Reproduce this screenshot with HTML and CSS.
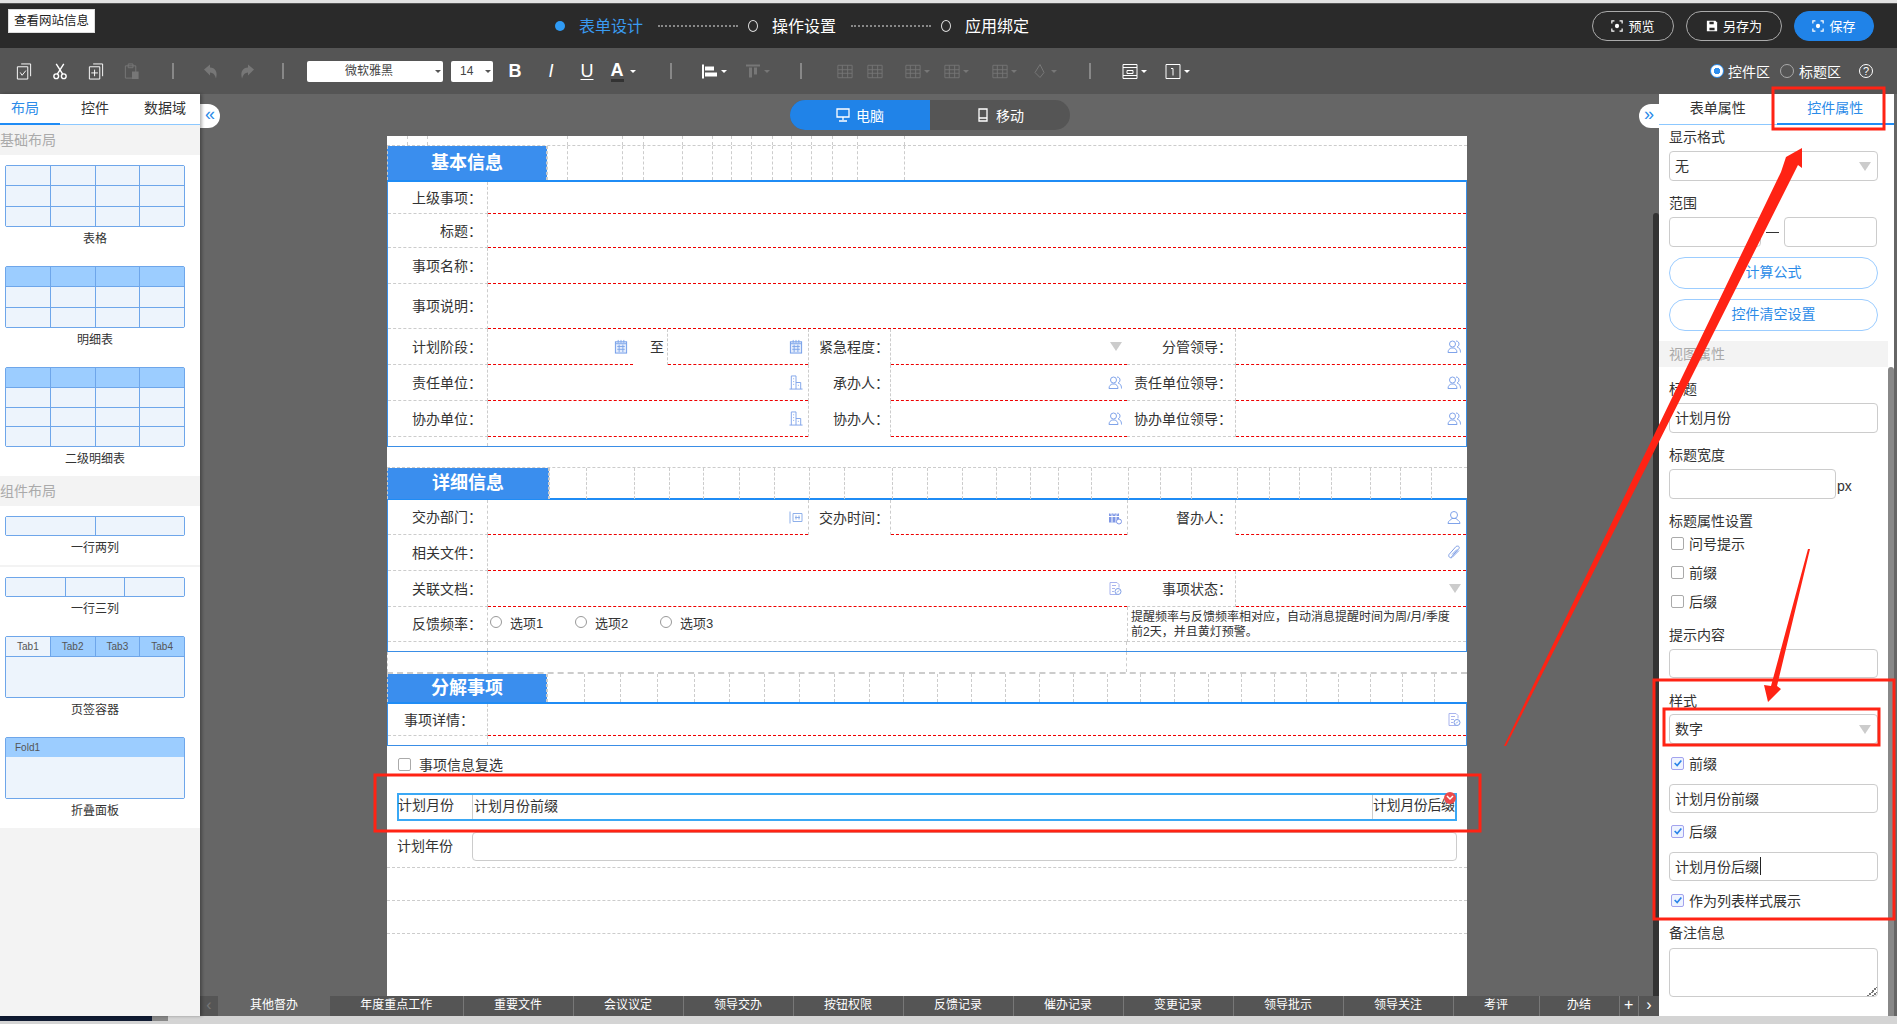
FILE: index.html
```html
<!DOCTYPE html>
<html lang="zh-CN">
    <head>
        <meta charset="UTF-8">
        <title>表单设计</title>
        <link rel="stylesheet" href="styles.css">
    </head>

    <body>
        <svg class="defs" width="0" height="0">
            <symbol id="i-cal" viewBox="0 0 14 16"><rect x="1" y="3" width="12" height="12" fill="#e3ecfc" stroke="#6f9be8"/><path d="M1 5h12M4 1v3M7 1v3M10 1v3M3 8h8M3 11h8M5 6v8M9 6v8" stroke="#7fa6ea" fill="none"/></symbol>
            <symbol id="i-org" viewBox="0 0 14 16"><path d="M2 15V1h5v14M7 8h5v7M0 15h14M4 4h1M4 7h1M4 10h1M9 11h1" stroke="#7fa3ea" fill="none"/></symbol>
            <symbol id="i-users" viewBox="0 0 14 14"><circle cx="5.500" cy="4.500" r="3" stroke="#7fa3ea" fill="none"/><path d="M1 13c0-3 2-4 3-4.500h3c1 .5 3 1.500 3 4.500zM9 1.500c2 0 3 1.500 3 3s-1 2.500-2 3c1.500.5 3.500 1.500 3.500 5.500" stroke="#7fa3ea" fill="none"/></symbol>
            <symbol id="i-user" viewBox="0 0 14 14"><circle cx="7" cy="4.500" r="3.500" stroke="#7fa3ea" fill="none"/><path d="M1 13c0-3 3-3.500 4-5h4c1 1.500 4 2 4 5z" stroke="#7fa3ea" fill="none"/></symbol>
            <symbol id="i-dept" viewBox="0 0 14 14"><path d="M1 1v12M4 3h9v8H4zM6 7h5M7 5v4M10 5v4" stroke="#8fb0ea" fill="none"/></symbol>
            <symbol id="i-calclock" viewBox="0 0 14 14"><rect x="1" y="3" width="10" height="9" fill="#7f97e6"/><path d="M3 1v3M6 1v3M9 1v3M1 6h10M4 4v8M8 4v8" stroke="#fff" fill="none"/><circle cx="11" cy="11" r="2.500" fill="#fff" stroke="#7f97e6"/></symbol>
            <symbol id="i-clip" viewBox="0 0 14 14"><path d="M4 12 12 3c1-2-1-3-3-2L2 9c-1 2 1 4 3 3l7-7M5 9l5-5" stroke="#7f9fe6" fill="none"/></symbol>
            <symbol id="i-docedit" viewBox="0 0 14 14"><path d="M9 13H2V1h7l2 2v3M4 4h4M4 7h3M4 10h2" stroke="#a9b4ee" fill="none"/><circle cx="10" cy="10" r="3" fill="#fff" stroke="#7f9fe6"/><path d="m9 11 2-2" stroke="#7f9fe6"/></symbol>
            <symbol id="t-check" viewBox="0 0 16 18"><path d="M5 1h10v13M1 4h11v13H1z" stroke="#fff" fill="none"/><path d="m4 10 2 3 4-5" stroke="#fff" fill="none"/></symbol>
            <symbol id="t-cut" viewBox="0 0 16 18"><circle cx="4" cy="14" r="2.500" stroke="#fff" stroke-width="1.500" fill="none"/><circle cx="12" cy="14" r="2.500" stroke="#fff" stroke-width="1.500" fill="none"/><path d="m5 12 7-11M11 12 4 1" stroke="#fff" stroke-width="1.500"/></symbol>
            <symbol id="t-copy" viewBox="0 0 16 18"><path d="M5 1h10v13M1 4h11v13H1zM6.500 7v7M3 10.500h7" stroke="#fff" fill="none"/></symbol>
            <symbol id="t-paste" viewBox="0 0 16 18"><path d="M1 3h11v13H1zM4 1h5v4H4z" fill="none" stroke="#777"/><rect x="8" y="9" width="7" height="8" fill="#777"/></symbol>
            <symbol id="t-undo" viewBox="0 0 16 16"><path d="M1 6 7 1v3c5 0 8 4 6 11-1-4-3-6-6-6v3z" fill="#777"/></symbol>
            <symbol id="t-redo" viewBox="0 0 16 16"><path d="M15 6 9 1v3c-5 0-8 4-6 11 1-4 3-6 6-6v3z" fill="#777"/></symbol>
            <symbol id="t-align" viewBox="0 0 16 16"><path d="M1 1v14" stroke="#fff" stroke-width="2"/><path d="M3 3h9v4H3zM3 9h12v4H3z" fill="#fff"/></symbol>
            <symbol id="t-valign" viewBox="0 0 16 16"><path d="M1 2h14" stroke="#777" stroke-width="2"/><path d="M4 4h3v10H4zM9 4h3v7H9z" fill="#777"/></symbol>
            <symbol id="t-merge" viewBox="0 0 18 16"><path d="M1 1h16v14H1zM1 6h16M1 10h16M6 1v14M12 1v14" stroke="#777" fill="none"/></symbol>
            <symbol id="t-frame" viewBox="0 0 16 16"><path d="M1 1h14v14H1zM1 4h14M1 12h14M5 7h6v3H5z" stroke="#fff" fill="none"/></symbol>
            <symbol id="t-box" viewBox="0 0 16 16"><path d="M1 1h14v14H1zM6 5h2v7" stroke="#fff" fill="none"/></symbol>
            <symbol id="t-fill" viewBox="0 0 16 16"><path d="M8 1 3 9l5 5 4-5z" stroke="#777" fill="none"/></symbol>
            <symbol id="b-scan" viewBox="0 0 14 14"><path d="M1 4V1h3M10 1h3v3M13 10v3h-3M4 13H1v-3" stroke="#fff" fill="none" stroke-width="1.400"/><circle cx="7" cy="7" r="2.500" fill="#fff"/></symbol>
            <symbol id="b-disk" viewBox="0 0 14 14"><path d="M1 1h10l2 2v10H1z" fill="#fff"/><path d="M4 2h5v3H4zM4 9h6v3H4z" fill="#2a2a2a"/></symbol>
            <symbol id="d-pc" viewBox="0 0 14 14"><path d="M1 1h12v8H1zM7 9v3M3 13h8" stroke="#fff" fill="none" stroke-width="1.300"/></symbol>
            <symbol id="d-phone" viewBox="0 0 14 14"><path d="M3 1h8v12H3zM3 10h8" stroke="#fff" fill="none" stroke-width="1.300"/></symbol>
            <symbol id="c-tick" viewBox="0 0 12 12"><path d="m2 6 3 3 5-6" stroke="#2b84e8" stroke-width="2" fill="none"/></symbol>
        </svg>

        <div class="app">
            <div class="top-strip"></div>

            <header class="header">
                <div class="site-info">查看网站信息</div>
                <div class="steps">
                    <span class="step-dot"></span>
                    <span class="step-text step-active">表单设计</span>
                    <span class="step-line"></span>
                    <span class="step-ring"></span>
                    <span class="step-text">操作设置</span>
                    <span class="step-line"></span>
                    <span class="step-ring"></span>
                    <span class="step-text">应用绑定</span>
                </div>
                <div class="actions">
                    <span class="btn btn-preview"><svg class="btn-icon"><use href="#b-scan"/></svg>预览</span>
                    <span class="btn btn-saveas"><svg class="btn-icon"><use href="#b-disk"/></svg>另存为</span>
                    <span class="btn btn-save"><svg class="btn-icon"><use href="#b-scan"/></svg>保存</span>
                </div>
            </header>

            <div class="toolbar">
                <span class="tb first"><svg><use href="#t-check"/></svg></span>
                <span class="tb"><svg><use href="#t-cut"/></svg></span>
                <span class="tb"><svg><use href="#t-copy"/></svg></span>
                <span class="tb"><svg><use href="#t-paste"/></svg></span>
                <span class="tb-sep ml22"></span>
                <span class="tb ml19"><svg><use href="#t-undo"/></svg></span>
                <span class="tb"><svg><use href="#t-redo"/></svg></span>
                <span class="tb-sep ml17"></span>
                <span class="tb-select font-select">微软雅黑</span>
                <span class="tb-select size-select">14</span>
                <span class="tb tb-text ml4"><b>B</b></span>
                <span class="tb tb-text tb-italic">I</span>
                <span class="tb tb-text tb-under">U</span>
                <span class="tb tb-text tb-color caret"><b>A</b></span>
                <span class="tb-sep ml29"></span>
                <span class="tb caret ml24"><svg><use href="#t-align"/></svg></span>
                <span class="tb caret dim ml7"><svg><use href="#t-valign"/></svg></span>
                <span class="tb-sep ml25"></span>
                <span class="tb sm ml29"><svg><use href="#t-merge"/></svg></span>
                <span class="tb sm ml2"><svg><use href="#t-merge"/></svg></span>
                <span class="tb sm caret dim ml14"><svg><use href="#t-merge"/></svg></span>
                <span class="tb sm caret dim ml11"><svg><use href="#t-merge"/></svg></span>
                <span class="tb sm caret dim ml20"><svg><use href="#t-merge"/></svg></span>
                <span class="tb sm caret dim ml12"><svg><use href="#t-fill"/></svg></span>
                <span class="tb-sep ml31"></span>
                <span class="tb sm caret ml29"><svg><use href="#t-frame"/></svg></span>
                <span class="tb sm caret ml15"><svg><use href="#t-box"/></svg></span>
                <div class="area-switch">
                    <span class="area-radio on"></span><span>控件区</span>
                    <span class="area-radio"></span><span>标题区</span>
                    <span class="help">?</span>
                </div>
            </div>

            <div class="main">
                <aside class="left">
                    <div class="left-tabs">
                        <span class="left-tab current">布局</span>
                        <span class="left-tab">控件</span>
                        <span class="left-tab">数据域</span>
                    </div>
                    <div class="group-title">基础布局</div>
                    <div class="widgets">
                        <div class="widget">
                            <div class="mini cols4 rows3"><i></i><i></i><i></i><i></i><i></i><i></i><i></i><i></i><i></i><i></i><i></i><i></i></div>
                            <div class="widget-name">表格</div>
                        </div>
                        <div class="widget">
                            <div class="mini cols4 rows3 has-head"><i></i><i></i><i></i><i></i><i></i><i></i><i></i><i></i><i></i><i></i><i></i><i></i></div>
                            <div class="widget-name">明细表</div>
                        </div>
                        <div class="widget end">
                            <div class="mini cols4 rows4 has-head"><i></i><i></i><i></i><i></i><i></i><i></i><i></i><i></i><i></i><i></i><i></i><i></i><i></i><i></i><i></i><i></i></div>
                            <div class="widget-name">二级明细表</div>
                        </div>
                    </div>
                    <div class="group-title">组件布局</div>
                    <div class="widgets">
                        <div class="widget end split">
                            <div class="mini cols2 rows1"><i></i><i></i></div>
                            <div class="widget-name">一行两列</div>
                        </div>
                        <div class="widget next">
                            <div class="mini cols3 rows1"><i></i><i></i><i></i></div>
                            <div class="widget-name">一行三列</div>
                        </div>
                        <div class="widget">
                            <div class="mini mini-tabs">
                                <i class="tab-on">Tab1</i><i>Tab2</i><i>Tab3</i><i>Tab4</i>
                                <i class="tab-body"></i>
                            </div>
                            <div class="widget-name">页签容器</div>
                        </div>
                        <div class="widget end">
                            <div class="mini mini-fold">
                                <i>Fold1</i>
                                <i class="tab-body"></i>
                            </div>
                            <div class="widget-name">折叠面板</div>
                        </div>
                    </div>
                    <div class="left-rest"></div>
                </aside>

                <div class="center">
                    <div class="canvas">
                        <div class="device-switch">
                            <span class="device on"><svg><use href="#d-pc"/></svg>电脑</span>
                            <span class="device"><svg><use href="#d-phone"/></svg>移动</span>
                        </div>

                        <div class="paper">
                            <div class="band"><i></i><i></i><i></i><i></i><i></i><i></i><i></i><i></i><i></i><i></i><i></i><i></i><i></i><i></i><i></i><i></i></div>
                            <div class="sec-head head-a">
                                <div class="sec-title">基本信息</div>
                                <i></i><i></i><i></i><i></i><i></i><i></i><i></i><i></i><i></i><i></i><i></i><i></i><i></i><i></i>
                            </div>
                            <div class="form-table">
                                <div class="row h32">
                                    <div class="lb">上级事项：</div><div class="fd span-all"></div>
                                </div>
                                <div class="row h34">
                                    <div class="lb">标题：</div><div class="fd span-all"></div>
                                </div>
                                <div class="row h36">
                                    <div class="lb">事项名称：</div><div class="fd span-all"></div>
                                </div>
                                <div class="row h45">
                                    <div class="lb">事项说明：</div><div class="fd span-all"></div>
                                </div>
                                <div class="row h36">
                                    <div class="lb">计划阶段：</div>
                                    <div class="fd"><svg class="ico"><use href="#i-cal"/></svg></div>
                                    <div class="lb to">至</div>
                                    <div class="fd"><svg class="ico"><use href="#i-cal"/></svg></div>
                                    <div class="lb plain">紧急程度：</div>
                                    <div class="fd"><span class="tri"></span></div>
                                    <div class="lb last">分管领导：</div>
                                    <div class="fd"><svg class="ico"><use href="#i-users"/></svg></div>
                                </div>
                                <div class="row h36">
                                    <div class="lb">责任单位：</div>
                                    <div class="fd span3"><svg class="ico"><use href="#i-org"/></svg></div>
                                    <div class="lb plain">承办人：</div>
                                    <div class="fd"><svg class="ico"><use href="#i-users"/></svg></div>
                                    <div class="lb last">责任单位领导：</div>
                                    <div class="fd"><svg class="ico"><use href="#i-users"/></svg></div>
                                </div>
                                <div class="row h36">
                                    <div class="lb">协办单位：</div>
                                    <div class="fd span3"><svg class="ico"><use href="#i-org"/></svg></div>
                                    <div class="lb plain">协办人：</div>
                                    <div class="fd"><svg class="ico"><use href="#i-users"/></svg></div>
                                    <div class="lb last">协办单位领导：</div>
                                    <div class="fd"><svg class="ico"><use href="#i-users"/></svg></div>
                                </div>
                                <div class="row h10 gap-row"><i></i></div>
                            </div>

                            <div class="gap-20"></div>

                            <div class="sec-head head-b">
                                <div class="sec-title">详细信息</div>
                                <i></i><i></i><i></i><i></i><i></i><i></i><i></i><i></i><i></i><i></i><i></i><i></i><i></i><i></i><i></i><i></i><i></i><i></i><i></i><i></i><i></i><i></i><i></i><i></i><i></i><i></i>
                            </div>
                            <div class="form-table">
                                <div class="row h35">
                                    <div class="lb">交办部门：</div>
                                    <div class="fd span3"><svg class="ico"><use href="#i-dept"/></svg></div>
                                    <div class="lb plain">交办时间：</div>
                                    <div class="fd"><svg class="ico"><use href="#i-calclock"/></svg></div>
                                    <div class="lb plain last">督办人：</div>
                                    <div class="fd"><svg class="ico"><use href="#i-user"/></svg></div>
                                </div>
                                <div class="row h36">
                                    <div class="lb">相关文件：</div>
                                    <div class="fd span-all"><svg class="ico"><use href="#i-clip"/></svg></div>
                                </div>
                                <div class="row h36">
                                    <div class="lb">关联文档：</div>
                                    <div class="fd span5"><svg class="ico"><use href="#i-docedit"/></svg></div>
                                    <div class="lb last">事项状态：</div>
                                    <div class="fd"><span class="tri"></span></div>
                                </div>
                                <div class="row h35">
                                    <div class="lb">反馈频率：</div>
                                    <div class="fd-grey span5 radios">
                                        <span class="radio"></span><span class="radio-text">选项1</span>
                                        <span class="radio"></span><span class="radio-text">选项2</span>
                                        <span class="radio"></span><span class="radio-text">选项3</span>
                                    </div>
                                    <div class="note">提醒频率与反馈频率相对应，自动消息提醒时间为周/月/季度前2天，并且黄灯预警。</div>
                                </div>
                                <div class="row h10 gap-row"><i></i><i class="gap-end"></i></div>
                            </div>
                            <div class="row h20 gap-row open"><i></i><i class="gap-end"></i></div>

                            <div class="sec-head head-c">
                                <div class="sec-title">分解事项</div>
                                <i></i><i></i><i></i><i></i><i></i><i></i><i></i><i></i><i></i><i></i><i></i><i></i><i></i><i></i><i></i><i></i><i></i><i></i><i></i><i></i><i></i><i></i><i></i><i></i><i></i><i></i><i></i>
                            </div>
                            <div class="form-table">
                                <div class="row h32">
                                    <div class="lb lb-wide">事项详情：</div>
                                    <div class="fd span-all"><svg class="ico"><use href="#i-docedit"/></svg></div>
                                </div>
                                <div class="row h10 gap-row"><i></i></div>
                            </div>

                            <label class="check-row">
                                <span class="box"></span>事项信息复选
                            </label>

                            <div class="picked">
                                <span class="picked-name">计划月份</span>
                                <span class="picked-prefix">计划月份前缀</span>
                                <span class="picked-suffix">计划月份后缀</span>
                                <svg class="del-badge" viewBox="0 0 12 12"><circle cx="6" cy="6" r="6" fill="#ec4a4a"/><path d="m3 4 3 3 3-3" stroke="#fff" stroke-width="1.500" fill="none"/></svg>
                            </div>

                            <div class="year-row">
                                <span class="year-name">计划年份</span>
                                <span class="year-input"></span>
                            </div>
                            <div class="empty-row first-empty"></div>
                            <div class="empty-row"></div>
                            <div class="empty-row"></div>
                        </div>

                        <span class="fold-btn fold-left">«</span>
                        <span class="fold-btn fold-right">»</span>
                        <span class="side-scroll"></span>
                    </div>

                    <div class="sheet-tabs">
                        <span class="sheet arrow">‹</span>
                        <span class="sheet on">其他督办</span>
                        <span class="sheet w134">年度重点工作</span>
                        <span class="sheet">重要文件</span>
                        <span class="sheet">会议议定</span>
                        <span class="sheet">领导交办</span>
                        <span class="sheet">按钮权限</span>
                        <span class="sheet">反馈记录</span>
                        <span class="sheet">催办记录</span>
                        <span class="sheet">变更记录</span>
                        <span class="sheet">领导批示</span>
                        <span class="sheet">领导关注</span>
                        <span class="sheet w86">考评</span>
                        <span class="sheet w80">办结</span>
                        <span class="sheet w19 big">+</span>
                        <span class="sheet w20 big">›</span>
                    </div>
                </div>

                <aside class="right">
                    <div class="right-tabs">
                        <span class="right-tab">表单属性</span>
                        <span class="right-tab current">控件属性</span>
                    </div>
                    <div class="props">
                        <div class="p-label first">显示格式</div>
                        <div class="p-input">无<span class="tri"></span></div>

                        <div class="p-label">范围</div>
                        <div class="range">
                            <span class="p-input"></span><span class="range-dash"></span><span class="p-input"></span>
                        </div>

                        <div class="pill">计算公式</div>
                        <div class="pill">控件清空设置</div>

                        <div class="p-section">视图属性</div>

                        <div class="p-label">标题</div>
                        <div class="p-input">计划月份</div>

                        <div class="p-label">标题宽度</div>
                        <div class="width-row"><span class="p-input"></span><span class="px">px</span></div>

                        <div class="p-label">标题属性设置</div>
                        <div class="p-check tight"><span class="box"></span>问号提示</div>
                        <div class="p-check"><span class="box"></span>前缀</div>
                        <div class="p-check"><span class="box"></span>后缀</div>

                        <div class="p-label">提示内容</div>
                        <div class="p-input low"></div>

                        <div class="p-label after-low">样式</div>
                        <div class="p-input style-select">数字<span class="tri"></span></div>

                        <div class="p-check after-select"><span class="box on"><svg><use href="#c-tick"/></svg></span>前缀</div>
                        <div class="p-input low after-check">计划月份前缀</div>
                        <div class="p-check after-input"><span class="box on"><svg><use href="#c-tick"/></svg></span>后缀</div>
                        <div class="p-input low after-check">计划月份后缀<span class="cursor"></span></div>
                        <div class="p-check after-select"><span class="box on"><svg><use href="#c-tick"/></svg></span>作为列表样式展示</div>

                        <div class="p-label last-label">备注信息</div>
                        <div class="p-area"></div>
                    </div>
                    <span class="right-scroll"></span>
                </aside>
            </div>

            <div class="foot">
                <span class="foot-navy"></span>
                <span class="foot-grey"></span>
            </div>
        </div>

        <!-- 红色标注 -->
        <svg class="marks" viewBox="0 0 1897 1024">
            <rect x="1773" y="88" width="111" height="41"/>
            <rect x="375" y="775" width="1105" height="56"/>
            <rect x="1654" y="680" width="240" height="239"/>
            <rect x="1664" y="709" width="215" height="36"/>
            <polygon points="1504,746 1781,172 1786,157 1802,148 1802,168 1798,165 1506,746"/>
            <polygon points="1810,549 1777,686 1781,689 1768,702 1764,685 1771,686 1808,549"/>
        </svg>
    </body>
</html>
```

FILE: styles.css
```css
* {
    margin: 0;
    padding: 0;
    box-sizing: border-box;
}

body {
    font-family: "Liberation Sans", "Noto Sans CJK SC", sans-serif;
    font-size: 14px;
    color: #333;
    background: #ddd;
    overflow: hidden;
}

i {
    font-style: normal;
}

.defs {
    position: absolute;
}

.app {
    width: 1897px;
    height: 1024px;
    display: flex;
    flex-direction: column;
}

.top-strip {
    height: 4px;
    background: #e2e2e2;
    border-bottom: 1px solid #555;
}

/* header */
.header {
    height: 44px;
    background: #2a2a2a;
    display: flex;
    align-items: flex-start;
    color: #fff;
}

.site-info {
    margin: 5px 0 0 8px;
    width: 87px;
    height: 24px;
    line-height: 22px;
    background: #fff;
    border: 1px solid #ddd;
    color: #222;
    font-size: 12.500px;
    text-align: center;
}

.steps {
    margin-left: 460px;
    height: 44px;
    display: flex;
    align-items: center;
}

.step-dot {
    width: 10px;
    height: 10px;
    border-radius: 50%;
    background: #2f9bf5;
    margin-right: 14px;
}

.step-text {
    font-size: 16px;
    padding-bottom: 2px;
}

.step-active {
    color: #3a9bf0;
}

.step-line {
    width: 80px;
    margin: 0 10px 0 15px;
    border-top: 2px dotted #888;
}

.step-ring {
    width: 10px;
    height: 12px;
    border: 1.500px solid #ddd;
    border-radius: 50%;
    margin-right: 14px;
}

.actions {
    margin-left: auto;
    padding: 7px 23px 0 0;
    display: flex;
    gap: 12px;
}

.btn {
    height: 30px;
    padding-bottom: 1px;
    border: 1px solid #aaa;
    border-radius: 15px;
    display: flex;
    align-items: center;
    justify-content: center;
    gap: 5px;
    font-size: 13px;
}

.btn-icon {
    width: 12px;
    height: 12px;
}

.btn-preview {
    width: 82px;
}

.btn-saveas {
    width: 96px;
}

.btn-save {
    width: 80px;
    background: #2083e8;
    border-color: #2083e8;
}

/* toolbar */
.toolbar {
    height: 46px;
    background: #555;
    display: flex;
    align-items: center;
    color: #fff;
}

.tb {
    width: 36px;
    height: 22px;
    display: flex;
    align-items: center;
    justify-content: center;
    flex: none;
}

.tb svg {
    width: 16px;
    height: 17px;
}

.tb.first {
    margin-left: 6px;
}

.tb.sm {
    width: 28px;
}

.tb.caret::after {
    content: "";
    margin-left: 3px;
    border: 3px solid transparent;
    border-top-color: #fff;
    border-bottom: 0;
}

.tb.tb-color::after {
    margin-left: 6px;
}

.tb.dim::after {
    border-top-color: #777;
}

.tb-text {
    font-size: 18px;
}

.tb-italic {
    font-style: italic;
}

.tb-under {
    text-decoration: underline;
    text-underline-offset: 2px;
}

.tb-color b {
    border-bottom: 3px solid #333;
    line-height: 18px;
}

.tb-sep {
    width: 2px;
    height: 16px;
    background: #888;
    flex: none;
}

.ml2 { margin-left: 2px; }
.ml4 { margin-left: 4px; }
.ml7 { margin-left: 7px; }
.ml11 { margin-left: 11px; }
.ml12 { margin-left: 12px; }
.ml14 { margin-left: 14px; }
.ml15 { margin-left: 15px; }
.ml17 { margin-left: 17px; }
.ml19 { margin-left: 19px; }
.ml20 { margin-left: 20px; }
.ml22 { margin-left: 22px; }
.ml24 { margin-left: 24px; }
.ml25 { margin-left: 25px; }
.ml29 { margin-left: 29px; }
.ml31 { margin-left: 31px; }

.tb-select {
    height: 21px;
    background: #fff;
    border-radius: 2px;
    color: #444;
    font-size: 12px;
    line-height: 21px;
    position: relative;
    flex: none;
}

.tb-select::after {
    content: "";
    position: absolute;
    right: 2px;
    top: 9px;
    border: 3px solid transparent;
    border-top-color: #555;
    border-bottom: 0;
}

.font-select {
    width: 136px;
    margin-left: 23px;
    text-align: center;
    padding-right: 12px;
}

.size-select {
    width: 42px;
    margin-left: 8px;
    padding-left: 9px;
}

.area-switch {
    margin-left: auto;
    padding-right: 24px;
    display: flex;
    align-items: center;
    font-size: 14px;
}

.area-radio {
    width: 14px;
    height: 14px;
    flex: none;
    border: 1px solid #aaa;
    border-radius: 50%;
    margin: 0 5px 0 10px;
    background: #555;
}

.area-radio.on {
    margin: 0 4px 0 8px;
    border-color: #2f8fef;
    background: radial-gradient(circle, #2f8fef 3px, #fff 3.500px);
}

.help {
    width: 14px;
    height: 14px;
    line-height: 12px;
    border: 1px solid #fff;
    border-radius: 50%;
    margin-left: 18px;
    font-size: 11px;
    text-align: center;
}

/* main */
.main {
    height: 922px;
    display: flex;
    background: #666;
}

.left {
    width: 200px;
    flex: none;
    background: #fff;
    display: flex;
    flex-direction: column;
    box-shadow: 2px 0 3px rgba(0, 0, 0, .3);
    z-index: 2;
}

.left-tabs {
    height: 31px;
    display: flex;
    border-bottom: 1px solid #8cc8ff;
    flex: none;
}

.left-tab {
    width: 70px;
    text-align: center;
    line-height: 28px;
}

.left-tab.current {
    width: 60px;
    padding-right: 10px;
    color: #2b8be8;
    border-bottom: 2px solid #1f8cf5;
    height: 31px;
}

.group-title {
    height: 30px;
    line-height: 30px;
    background: #f3f3f3;
    color: #aaa;
    flex: none;
}

.widgets {
    padding-top: 10px;
}

.widget {
    padding: 0 15px 15px 5px;
}

.widget.end {
    padding-bottom: 5px;
}

.widget.split {
    padding-bottom: 5px;
    border-bottom: 2px solid #f3f3f3;
}

.widget.next {
    padding-top: 10px;
}

.widget-name {
    height: 24px;
    line-height: 24px;
    text-align: center;
    font-size: 12px;
}

.mini {
    display: grid;
    gap: 1px;
    background: #6ea6ea;
    border: 1px solid #6ea6ea;
    border-radius: 2px;
    font-size: 10px;
    color: #555;
}

.mini i {
    background: #edf4fc;
}

.cols4 {
    grid-template-columns: repeat(4, 1fr);
}

.cols3 {
    grid-template-columns: repeat(3, 1fr);
}

.cols2 {
    grid-template-columns: repeat(2, 1fr);
}

.rows1 {
    height: 20px;
}

.rows3 {
    height: 62px;
    grid-auto-rows: 1fr;
}

.rows4 {
    height: 80px;
    grid-auto-rows: 1fr;
}

.has-head i:nth-child(-n+4) {
    background: #9ccdff;
}

.mini-tabs {
    height: 62px;
    grid-template-columns: repeat(4, 1fr);
    grid-template-rows: 19px 1fr;
    text-align: center;
    line-height: 19px;
}

.mini-tabs i {
    background: #9ccdff;
}

.mini-tabs i.tab-on {
    background: #edf4fc;
}

.mini-tabs i.tab-body {
    grid-column: 1 / -1;
    background: #edf4fc;
}

.mini-fold {
    height: 62px;
    grid-template-rows: 19px 1fr;
    gap: 0;
    line-height: 19px;
}

.mini-fold i:first-child {
    background: #9ccdff;
    padding-left: 9px;
}

.mini-fold i.tab-body {
    background: #edf4fc;
}

.left-rest {
    flex: 1;
    background: #f3f3f3;
}

/* center */
.center {
    flex: 1;
    min-width: 0;
    display: flex;
    flex-direction: column;
}

.canvas {
    height: 902px;
    position: relative;
    padding-left: 187px;
    overflow: hidden;
}

.device-switch {
    width: 280px;
    height: 30px;
    margin: 6px 0 6px 403px;
    display: flex;
    border-radius: 15px;
    background: #555;
    overflow: hidden;
    color: #fff;
    font-size: 14px;
}

.device {
    width: 140px;
    display: flex;
    align-items: center;
    justify-content: center;
    gap: 6px;
}

.device svg {
    width: 14px;
    height: 14px;
}

.device.on {
    background: #2083e8;
}

.paper {
    width: 1080px;
    height: 860px;
    background: #fff;
    overflow: hidden;
}

.band {
    height: 9px;
    display: grid;
    grid-template-columns: 20px 20px 140px 55px 21px 39px 30px 19px 20px 21px 19px 20px 21px 25px 47px 342px;
}

.band i, .sec-head i {
    border-left: 1px dashed #ccc;
}

.band i:first-child {
    border-left: 0;
}

.sec-head {
    height: 35px;
    display: grid;
    border-top: 1px dashed #ccc;
}

.sec-title {
    background: #3a8eee;
    color: #fff;
    font-size: 18px;
    font-weight: bold;
    text-align: center;
    line-height: 34px;
    border-left: 1px dashed #ccc;
    border-right: 1px dashed #ccc;
}

.head-a {
    grid-template-columns: 160px 20px 55px 21px 39px 30px 19px 20px 21px 19px 20px 21px 25px 47px 342px;
}

.head-b {
    height: 31px;
    grid-template-columns: 162px 37px 48px 35px 34px 36px 35px 35px 35px 48px 35px 35px 34px 34px 28px 33px 37px 32px 31px 46px 32px 30px 32px 39px 30px 31px 1fr;
}

.head-b .sec-title {
    line-height: 31px;
}

.head-c {
    height: 30px;
    border-top-width: 2px;
    grid-template-columns: 160px 37px 36px 37px 37px 35px 35px 35px 35px 35px 34px 34px 34px 34px 34px 34px 34px 33px 34px 34px 33px 33px 32px 32px 32px 32px 32px 1fr;
}

.head-c .sec-title {
    line-height: 28px;
}

.form-table {
    border-top: 2px solid #1f8cf5;
    border-left: 1px solid #3a8ee6;
    border-right: 1px solid #3a8ee6;
    border-bottom: 1px solid #3a8ee6;
}

.row {
    display: grid;
    grid-template-columns: 100px 145px 35px 140px 83px 236px 109px 1fr;
}

.h10 { height: 9px; }
.h20 { height: 20px; }
.h32 { height: 32px; }
.h34 { height: 34px; }
.h35 { height: 35px; }
.h36 { height: 36px; }
.h45 { height: 45px; }

.lb {
    display: flex;
    align-items: center;
    justify-content: flex-end;
    padding: 0 5px 2px 0;
    border-bottom: 1px dashed #ccc;
    border-right: 1px dashed #ccc;
    font-size: 14px;
    white-space: nowrap;
}

.lb.plain {
    border-bottom: 0;
    border-left: 1px dashed #ccc;
    padding-right: 1px;
}

.lb.last {
    padding-right: 3px;
}

.lb.to {
    border-bottom: 0;
    justify-content: center;
    padding: 0 0 2px 14px;
}

.lb.lb-wide {
    padding-right: 13px;
}

.fd {
    display: flex;
    align-items: center;
    justify-content: flex-end;
    padding-right: 5px;
    border-bottom: 1px dashed #e00;
}

.fd-grey {
    border-bottom: 1px dashed #ccc;
}

.span-all {
    grid-column: 2 / -1;
}

.span3 {
    grid-column: span 3;
}

.span5 {
    grid-column: span 5;
}

.ico {
    width: 14px;
    height: 15px;
}

.tri {
    width: 0;
    height: 0;
    border: 6px solid transparent;
    border-top: 9px solid #ccc;
    border-bottom: 0;
}

.radios {
    display: flex;
    align-items: center;
    padding: 0 0 4px 2px;
}

.radio {
    width: 12px;
    height: 12px;
    border: 1px solid #999;
    border-radius: 50%;
}

.radio-text {
    margin-left: 8px;
    width: 65px;
    font-size: 13px;
}

.note {
    grid-column: span 2;
    padding: 3px 10px 0 3px;
    border-left: 1px dashed #ccc;
    border-bottom: 1px dashed #ccc;
    font-size: 12px;
    line-height: 15px;
}

.gap-row {
    border-bottom: 0;
}

.gap-row i {
    border-right: 1px dashed #ccc;
}

.gap-row i.gap-end {
    grid-column: 2 / 7;
    border-right: 1px dashed #ccc;
}

.gap-row.open {
    border-left: 1px dashed #ccc;
    margin-left: 0;
}

.gap-20 {
    height: 20px;
}

.check-row {
    height: 20px;
    margin: 8px 0 0 11px;
    display: flex;
    align-items: center;
    gap: 8px;
    font-size: 14px;
}

.box {
    width: 13px;
    height: 13px;
    border: 1px solid #aaa;
    border-radius: 2px;
    background: #fff;
    flex: none;
    display: flex;
    align-items: center;
    justify-content: center;
}

.box.on {
    border-color: #a3a3ee;
    background: #eef3ff;
}

.box svg {
    width: 10px;
    height: 10px;
}

.picked {
    position: relative;
    height: 28px;
    margin: 19px 10px 0 10px;
    border: 2px solid #3aa8f5;
    display: flex;
    align-items: center;
    font-size: 14px;
    white-space: nowrap;
}

.picked-name {
    width: 75px;
    height: 100%;
    margin-left: -1px;
    line-height: 21px;
    border-right: 1px solid #ccc;
}

.picked-prefix {
    padding: 0 0 5px 1px;
    flex: 1;
}

.picked-suffix {
    width: 83px;
    height: 100%;
    line-height: 21px;
    letter-spacing: -.4px;
    border-left: 1px solid #ccc;
}

.del-badge {
    position: absolute;
    right: -1px;
    top: -3px;
    width: 12px;
    height: 12px;
}

.year-row {
    height: 29px;
    margin: 11px 10px 0 10px;
    display: flex;
    align-items: center;
}

.year-name {
    width: 75px;
    padding-bottom: 3px;
}

.year-input {
    flex: 1;
    height: 100%;
    border: 1px solid #ccc;
    border-radius: 4px;
}

.empty-row {
    height: 33px;
    border-top: 1px dashed #ccc;
}

.first-empty {
    margin-top: 6px;
}

.fold-btn {
    position: absolute;
    top: 10px;
    width: 20px;
    height: 24px;
    background: #fff;
    color: #2b8be8;
    font-size: 18px;
    line-height: 20px;
    text-align: center;
}

.fold-left {
    left: 0;
    border-radius: 0 12px 12px 0;
}

.fold-right {
    right: 0;
    border-radius: 12px 0 0 12px;
}

.side-scroll {
    position: absolute;
    right: 0;
    top: 119px;
    width: 6px;
    height: 790px;
    background: #333;
    border-radius: 3px;
}

.sheet-tabs {
    height: 20px;
    background: #555;
    display: flex;
    color: #fff;
    font-size: 12px;
    line-height: 18px;
    text-align: center;
}

.sheet {
    width: 110px;
    border-right: 1px solid #777;
    flex: none;
}

.sheet.arrow {
    width: 18px;
    border-right: 0;
    color: #777;
    font-size: 16px;
}

.sheet.on {
    width: 112px;
    background: #666;
    border-right: 0;
}

.w134 { width: 133.600px; }
.w86 { width: 86px; }
.w80 { width: 80px; }
.w19 { width: 19.400px; }
.w20 { width: 20px; border-right: 0; }

.big {
    font-size: 16px;
}

/* right panel */
.right {
    width: 235px;
    flex: none;
    background: #fff;
    position: relative;
    margin-right: 3px;
}

.right-tabs {
    height: 31px;
    display: flex;
    border-bottom: 1px solid #8cc8ff;
}

.right-tab {
    width: 118px;
    text-align: center;
    line-height: 28px;
}

.right-tab.current {
    color: #2b8be8;
    border-bottom: 2px solid #1f8cf5;
    height: 31px;
}

.props {
    padding-left: 10px;
}

.p-label {
    height: 20px;
    line-height: 18px;
    margin: 13px 0 3px;
}

.p-label.first {
    margin-top: 3px;
}

.p-label.after-low {
    margin: 14px 0 2px;
}

.p-label.last-label {
    line-height: 16px;
}

.p-input {
    display: flex;
    align-items: center;
    justify-content: space-between;
    width: 209px;
    height: 30px;
    padding: 0 5px 2px;
    border: 1px solid #ccc;
    border-radius: 4px;
    font-size: 14px;
}

.p-input .tri {
    margin: 2px 1px 0 0;
}

.p-input .cursor {
    width: 1px;
    height: 18px;
    background: #222;
    margin: 0 auto 0 1px;
}

.p-input.low {
    height: 29px;
}

.range {
    display: flex;
    align-items: center;
}

.range .p-input {
    width: 92px;
}

.range .p-input:last-child {
    width: 93px;
}

.range-dash {
    width: 13px;
    margin: 0 5px;
    border-top: 1px solid #333;
}

.pill {
    width: 209px;
    height: 32px;
    margin-top: 10px;
    border: 1px solid #9ccdff;
    border-radius: 16px;
    color: #2b8be8;
    line-height: 29px;
    text-align: center;
}

.p-section {
    width: 229px;
    height: 26px;
    margin: 10px 0 0 -10px;
    padding-left: 10px;
    background: #f3f3f3;
    color: #aaa;
    line-height: 26px;
}

.width-row {
    display: flex;
    align-items: flex-end;
}

.width-row .p-input {
    width: 167px;
}

.px {
    margin: 0 0 5px 1px;
}

.p-check {
    height: 20px;
    margin-top: 9px;
    padding-bottom: 4px;
    display: flex;
    align-items: center;
    gap: 5px;
}

.p-check .box {
    margin-left: 2px;
}

.p-check.tight {
    margin-top: 2px;
}

.p-check.after-select {
    margin-top: 11px;
}

.p-check.after-input {
    margin-top: 10px;
}

.p-input.after-check {
    margin-top: 9px;
    justify-content: flex-start;
}

.p-area {
    width: 209px;
    height: 49px;
    border: 1px solid #ccc;
    border-radius: 4px;
    background: linear-gradient(135deg, transparent 50%, #777 50%, #777 60%, transparent 60%, transparent 75%, #777 75%, #777 85%, transparent 85%) no-repeat right bottom / 10px 10px;
}

.right-scroll {
    position: absolute;
    right: 0;
    top: 273px;
    width: 6px;
    bottom: 0;
    background: #888;
    border-radius: 3px 3px 0 0;
}

.foot {
    height: 8px;
    display: flex;
    align-items: flex-start;
    background: #d4d4d4;
}

.foot-navy {
    width: 152px;
    height: 5px;
    background: #101b33;
}

.foot-grey {
    width: 16px;
    height: 5px;
    background: #888;
}

/* annotations drawn by hand over the page */
.marks {
    position: absolute;
    left: 0;
    top: 0;
    width: 1897px;
    height: 1024px;
    pointer-events: none;
    z-index: 5;
}

.marks rect {
    fill: none;
    stroke: #ff2314;
    stroke-width: 3;
}

.marks polygon {
    fill: #ff2314;
}
```
